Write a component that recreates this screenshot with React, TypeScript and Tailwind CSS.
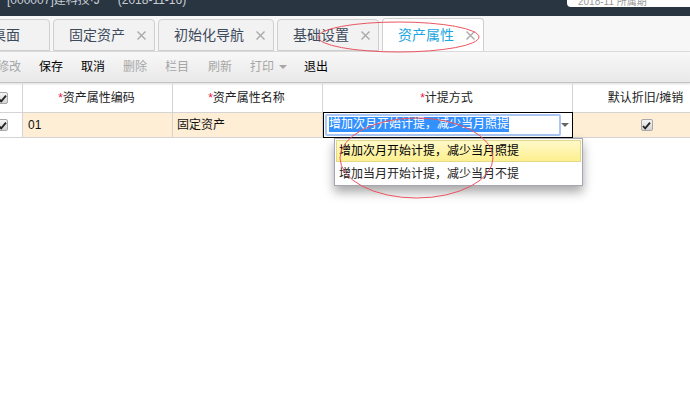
import React from "react";

const font = { fontFamily: '"Liberation Sans","Noto Sans CJK SC",sans-serif' };

function Close() {
  return (
    <svg width="11" height="11" viewBox="0 0 11 11" className="shrink-0">
      <path d="M1.5 1.5 9.5 9.5M9.5 1.5 1.5 9.5" stroke="#a9a9a9" strokeWidth="1.4" fill="none" />
    </svg>
  );
}

function Tab({ label, w, active, close = true, cls = "" }: { label: string; w: string; active?: boolean; close?: boolean; cls?: string }) {
  return (
    <div
      className={`${w} ${cls} h-[32px] shrink-0 flex items-center justify-between pl-[15px] pr-[7px] rounded-t-[4px] border border-[#cfcfcf] text-[14px] ${
        active ? "border-b-0 bg-white text-[#1aa6e0] h-[33px] relative z-10" : "bg-[#f2f2f2] text-[#3d4a5c]"
      }`}
    >
      <span className="whitespace-nowrap">{label}</span>
      {close && <Close />}
    </div>
  );
}

function Check() {
  return (
    <span className="w-[12px] h-[12px] shrink-0 rounded-[2px] border border-[#a8a8a8] bg-gradient-to-b from-[#f4f4f4] to-[#d4d4d4] flex items-center justify-center">
      <svg width="9" height="9" viewBox="0 0 9 9">
        <path d="M1 5 3.2 7.4 8 1.6" stroke="#222" strokeWidth="1.8" fill="none" />
      </svg>
    </span>
  );
}

function Tool({ label, on }: { label: string; on?: boolean }) {
  return <span className={`whitespace-nowrap ${on ? "text-black" : "text-[#a6a6a6]"}`}>{label}</span>;
}

function Head({ label, req, w }: { label: string; req?: boolean; w: string }) {
  return (
    <div className={`${w} shrink-0 h-full flex items-center justify-center pr-[2px] border-r border-[#d4d4d4] text-[12px] text-[#222] whitespace-nowrap`}>
      {req && <span className="text-[#e8174a]">*</span>}
      {label}
    </div>
  );
}

export default function App() {
  return (
    <div style={font} className="relative w-[690px] h-[412px] overflow-hidden bg-white">
      <header className="h-[16px] bg-[#2a3542] flex items-start justify-between overflow-hidden">
        <span className="ml-[7px] -mt-[8px] text-[12px] leading-[16px] text-[#c8ced6] whitespace-nowrap flex gap-[18px]">
          <span>[000007]建科技·J</span>
          <span>(2018-11-16)</span>
        </span>
        <span className="w-[123px] h-[7px] bg-white rounded-bl-[4px] overflow-hidden text-[10px] leading-[4px] text-[#999] pl-[11px] whitespace-nowrap">2018-11 所属期</span>
      </header>

      <nav className="h-[36px] bg-[#f7f7f7] border-b border-[#dcdcdc] flex items-end gap-[3px] pt-[5px]">
        <Tab label="桌面" w="w-[71px]" close={false} cls="-ml-[21px] !pl-[12px]" />
        <Tab label="固定资产" w="w-[102px]" />
        <Tab label="初始化导航" w="w-[116px]" />
        <Tab label="基础设置" w="w-[102px]" />
        <Tab label="资产属性" w="w-[102px]" active />
      </nav>

      <div className="h-[31px] bg-gradient-to-b from-[#f8f8f8] to-[#e9e9e9] border-b border-[#c4c4c4] shadow-[0_1px_2px_rgba(0,0,0,0.15)] flex items-center gap-[18px] -ml-[3px] text-[12px]">
        <Tool label="修改" />
        <Tool label="保存" on />
        <Tool label="取消" on />
        <Tool label="删除" />
        <Tool label="栏目" />
        <span className="ml-px"><Tool label="刷新" /></span>
        <span className="flex items-center gap-[5px] text-[#a6a6a6] -mr-[1px]">
          打印
          <span className="w-0 h-0 border-x-[4px] border-x-transparent border-t-[4px] border-t-[#a6a6a6]" />
        </span>
        <Tool label="退出" on />
      </div>

      <div className="h-[29px] mt-[1px] flex items-center border-b border-[#d4d4d4]">
        <div className="w-[24px] shrink-0 h-full flex items-center border-r border-[#d4d4d4] -ml-px">
          <span className="-ml-[3px]"><Check /></span>
        </div>
        <Head label="资产属性编码" req w="w-[150px]" />
        <Head label="资产属性名称" req w="w-[150px]" />
        <Head label="计提方式" req w="w-[250px]" />
        <Head label="默认折旧/摊销" w="w-[148px]" />
      </div>

      <div className="h-[25px] flex items-center bg-[#ffeed6] border-b border-[#d4d4d4] text-[12px] text-[#111]">
        <div className="w-[23px] shrink-0 h-full flex items-center bg-white border-r border-[#d4d4d4]">
          <span className="-ml-[4px]"><Check /></span>
        </div>
        <div className="w-[150px] shrink-0 h-full flex items-center pl-[5px] border-r border-[#d4d4d4]">01</div>
        <div className="w-[150px] shrink-0 h-full flex items-center pl-[4px] border-r border-[#d4d4d4]">固定资产</div>
        <div className="w-[250px] shrink-0 h-[26px] -mt-px bg-white border border-black flex items-center pl-px">
          <div className="w-[236px] h-[22px] border-2 border-[#a9c6f5] rounded-[2px] flex items-center pl-[2px]">
            <span className="bg-[#3390ff] text-white whitespace-nowrap leading-[15px]">增加次月开始计提，减少当月照提</span>
          </div>
          <span className="w-0 h-0 border-x-[4px] border-x-transparent border-t-[4px] border-t-[#666]" />
        </div>
        <div className="w-[147px] shrink-0 h-full flex items-center justify-center">
          <Check />
        </div>
      </div>

      <ul className="absolute left-[334px] top-[138px] w-[249px] h-[48px] bg-white border border-[#a8a4b0] p-px text-[12px] text-[#222] shadow-[0_6px_10px_rgba(0,0,0,0.35)]">
        <li className="h-[22px] flex items-center pl-[2px] border border-[#e3d98a] bg-gradient-to-b from-[#fff9c8] to-[#fdef8e] text-black whitespace-nowrap">增加次月开始计提，减少当月照提</li>
        <li className="h-[22px] mt-px flex items-center pl-[3px] whitespace-nowrap">增加当月开始计提，减少当月不提</li>
      </ul>

      <svg className="absolute inset-0 z-20 pointer-events-none" width="690" height="412" viewBox="0 0 690 412" fill="none">
        <ellipse cx="398.5" cy="37" rx="80.5" ry="15" stroke="#ea5560" strokeWidth="1" />
        <ellipse cx="416.5" cy="158" rx="76.5" ry="40" stroke="#ea5560" strokeWidth="1" />
      </svg>
    </div>
  );
}
